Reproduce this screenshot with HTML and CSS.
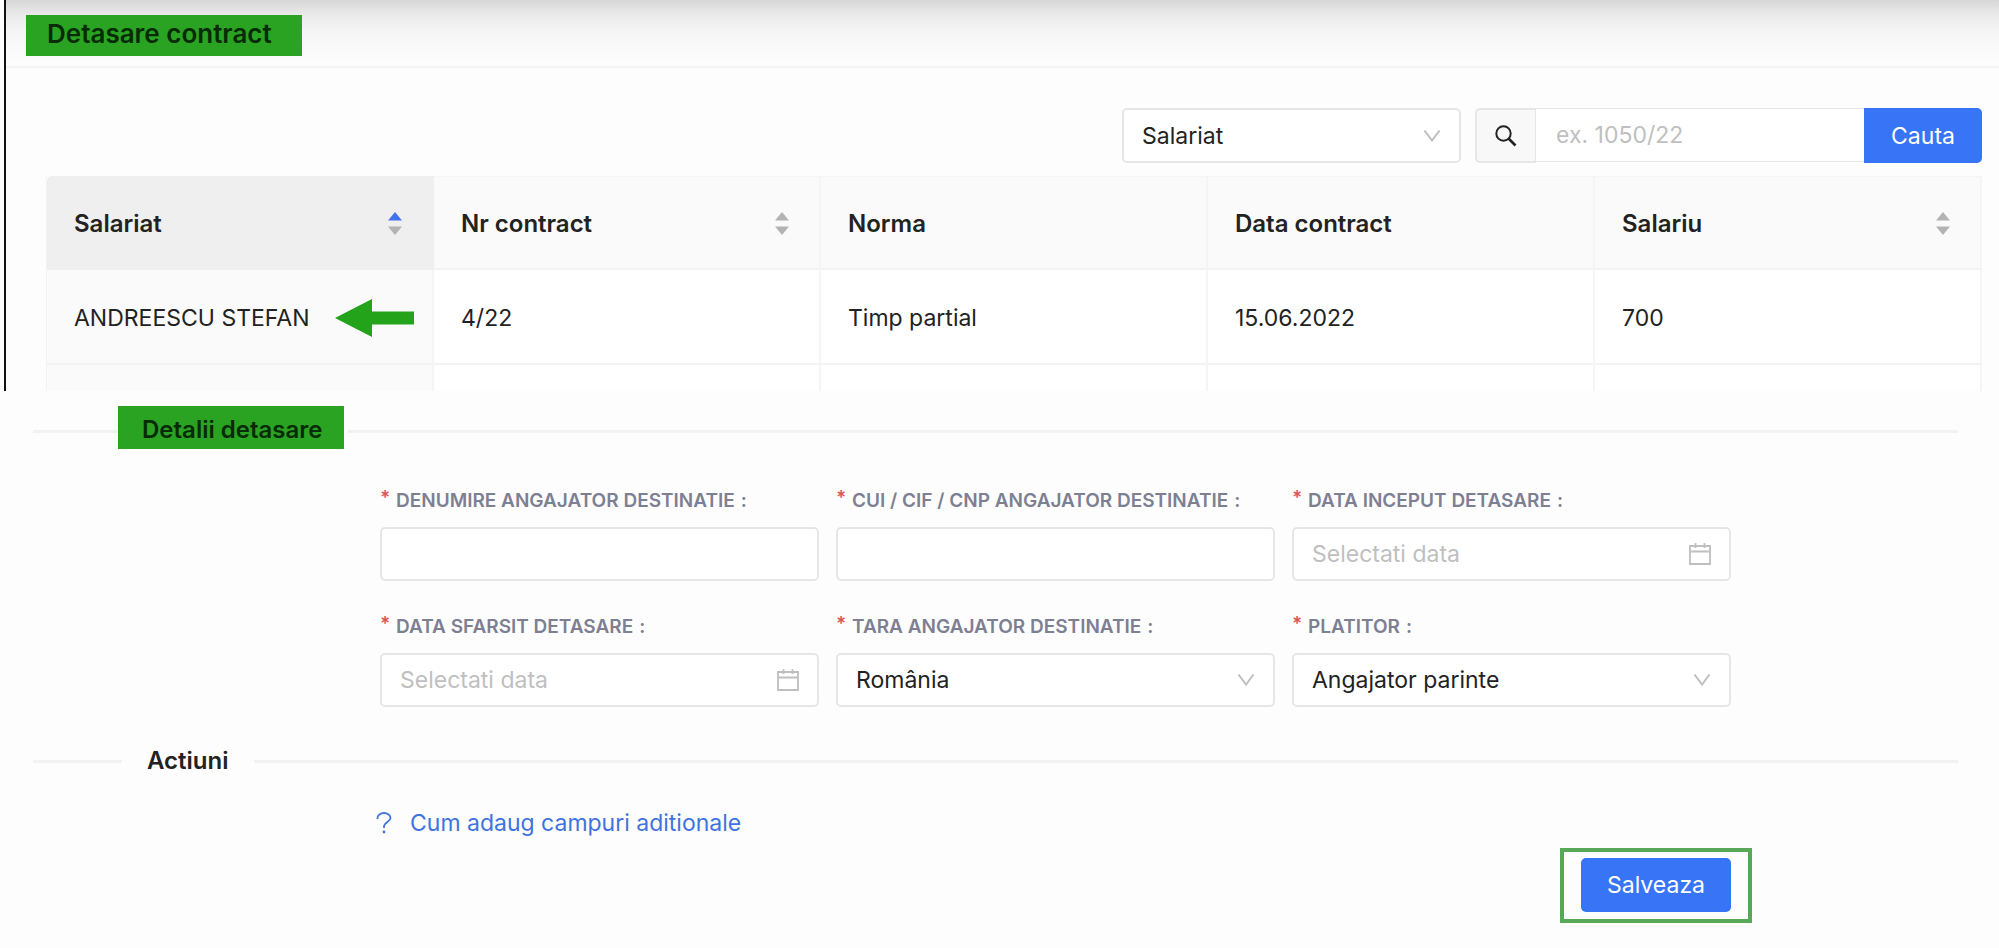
FILE: index.html
```html
<!DOCTYPE html>
<html lang="ro">
<head>
<meta charset="utf-8">
<meta name="viewport" content="width=device-width, initial-scale=1">
<title>Detasare contract</title>
<link rel="stylesheet" href="styles.css">
</head>
<body>
<svg class="sprite" aria-hidden="true">
  <symbol id="chevron" viewBox="0 0 18 14"><path d="M1.5 1.5 9 11.5 16.500 1.500" fill="none" stroke="currentColor" stroke-width="2"/></symbol>
  <symbol id="calendar" viewBox="0 0 22 22"><path d="M1 3h20v18H1zM1 8.500h20M6.500 0v5M15.500 0v5" fill="none" stroke="currentColor" stroke-width="1.800"/></symbol>
  <symbol id="sorter" viewBox="0 0 14 23"><path class="sort-up" d="M7 0 14 8.500H0z"/><path class="sort-down" d="M7 23 0 14.500h14z"/></symbol>
</svg>

<section class="contracts">
  <header class="page-head">
    <h1 class="mark mark-title">Detasare contract</h1>
  </header>
  <div class="contracts-body">
    <form class="search">
      <div class="control search-kind">
        <select class="field" aria-label="Cauta dupa"><option>Salariat</option></select>
        <svg class="chevron"><use href="#chevron"/></svg>
      </div>
      <div class="search-group">
        <label class="search-addon" for="query">
          <svg class="search-icon" viewBox="0 0 22 22" role="img" aria-label="Cautare"><circle cx="8.500" cy="8.500" r="7.200" fill="none" stroke="currentColor" stroke-width="2"/><path d="m13.500 13.500 7 7" stroke="currentColor" stroke-width="2.600"/></svg>
        </label>
        <input class="search-input" id="query" type="text" placeholder="ex. 1050/22">
        <button class="button search-button" type="button">Cauta</button>
      </div>
    </form>
    <table class="table">
      <thead>
        <tr>
          <th class="sorted" aria-sort="ascending"><div class="th-inner">Salariat <svg class="sorter"><use href="#sorter"/></svg></div></th>
          <th><div class="th-inner">Nr contract <svg class="sorter"><use href="#sorter"/></svg></div></th>
          <th>Norma</th>
          <th>Data contract</th>
          <th><div class="th-inner">Salariu <svg class="sorter"><use href="#sorter"/></svg></div></th>
        </tr>
      </thead>
      <tbody>
        <tr>
          <td class="sorted"><div class="name-cell">ANDREESCU STEFAN
            <svg class="arrow" viewBox="0 0 79 38" aria-hidden="true"><path d="M0 19 37 0v12.500h42v13H37V38z" fill="#22a31a"/></svg></div></td>
          <td>4/22</td>
          <td>Timp partial</td>
          <td>15.06.2022</td>
          <td>700</td>
        </tr>
        <tr class="cut-row"><td class="sorted"></td><td></td><td></td><td></td><td></td></tr>
      </tbody>
    </table>
  </div>
</section>

<main class="details">
  <div class="divider divider-marked"><h2 class="mark mark-section">Detalii detasare</h2></div>
  <form class="columns">
    <div class="fields">
      <div class="item">
        <label class="label" for="employer"><span class="star">*</span>DENUMIRE ANGAJATOR DESTINATIE<span class="colon">:</span></label>
        <div class="control"><input class="field" id="employer" type="text"></div>
      </div>
      <div class="item">
        <label class="label" for="cui"><span class="star">*</span>CUI / CIF / CNP ANGAJATOR DESTINATIE<span class="colon">:</span></label>
        <div class="control"><input class="field" id="cui" type="text"></div>
      </div>
      <div class="item">
        <label class="label" for="start"><span class="star">*</span>DATA INCEPUT DETASARE<span class="colon">:</span></label>
        <div class="control"><input class="field" id="start" type="text" placeholder="Selectati data"><svg class="calendar"><use href="#calendar"/></svg></div>
      </div>
      <div class="item">
        <label class="label" for="end"><span class="star">*</span>DATA SFARSIT DETASARE<span class="colon">:</span></label>
        <div class="control"><input class="field" id="end" type="text" placeholder="Selectati data"><svg class="calendar"><use href="#calendar"/></svg></div>
      </div>
      <div class="item">
        <label class="label" for="country"><span class="star">*</span>TARA ANGAJATOR DESTINATIE<span class="colon">:</span></label>
        <div class="control"><select class="field" id="country"><option>România</option></select><svg class="chevron"><use href="#chevron"/></svg></div>
      </div>
      <div class="item">
        <label class="label" for="payer"><span class="star">*</span>PLATITOR<span class="colon">:</span></label>
        <div class="control"><select class="field" id="payer"><option>Angajator parinte</option></select><svg class="chevron"><use href="#chevron"/></svg></div>
      </div>
    </div>
  </form>
  <div class="divider divider-plain"><h2 class="section-title">Actiuni</h2></div>
  <div class="columns">
    <div class="actions">
      <a class="help" href="#"><svg class="help-icon" viewBox="0 0 16 22" aria-hidden="true"><path d="M1.500 7V6a6.500 5 0 0 1 13 0c0 3.500-6.500 4.500-6.500 8.500v1.500" fill="none" stroke="currentColor" stroke-width="1.800"/><circle cx="8" cy="20" r="1.400" fill="currentColor"/></svg>Cum adaug campuri aditionale</a>
      <div class="save-frame"><button class="button save" type="button">Salveaza</button></div>
    </div>
  </div>
</main>
</body>
</html>
```
FILE: styles.css
```css
* { box-sizing: border-box; }

body {
  margin: 0;
  background: #fdfdfd;
  color: #222;
  font: 23px/32px Inter, "Liberation Sans", sans-serif;
}

h1, h2 { margin: 0; }

input, select, button { font: inherit; color: inherit; }

.sprite { position: absolute; width: 0; height: 0; }

/* Contract list */
.contracts {
  margin-left: 4px;
  border-left: 2px solid #111;
}

.page-head {
  display: flex;
  height: 68px;
  padding: 15px 20px 0;
  border-bottom: 2px solid #f4f4f4;
  background: linear-gradient(#d6d6d6, #dfdfdf 6px, #ebebeb 16px, #f4f4f4 30px, #f9f9f9 46px, #fdfdfd 64px);
}

.mark { background: #2aa323; color: #062b05; font-weight: 600; }

.mark-title {
  height: 41px;
  padding: 0 30px 0 21px;
  font-size: 26px;
  line-height: 38px;
}

.contracts-body { padding: 40px 17px 0 40px; }

.search {
  display: flex;
  justify-content: flex-end;
  gap: 14px;
  margin-bottom: 13px;
}

.search-kind { width: 339px; }
.search-kind .field { height: 55px; }

.search-group { display: flex; align-items: flex-start; width: 507px; }

.search-addon {
  display: flex;
  flex: none;
  align-items: center;
  justify-content: center;
  width: 61px;
  height: 55px;
  border: 2px solid #e6e6e6;
  border-right-width: 1px;
  border-radius: 5px 0 0 5px;
  background: #f8f8f8;
}

.search-icon { width: 22px; height: 22px; }

.search-input {
  flex: 1;
  min-width: 0;
  height: 54px;
  padding: 0 20px;
  border: solid #e6e6e6;
  border-width: 1px 0;
  background: #fff;
}

.button {
  border: 0;
  border-radius: 5px;
  background: #3875f6;
  color: #fff;
}

.search-button { flex: none; width: 118px; height: 55px; padding: 0; border-radius: 0 5px 5px 0; }

::placeholder { color: #bfbfbf; opacity: 1; }

/* Table */
.table {
  width: 100%;
  table-layout: fixed;
  border-collapse: separate;
  border-spacing: 0;
  border-left: 1px solid #f3f3f3;
}

.table th, .table td {
  height: 95px;
  padding: 2px 30px 0 27px;
  border-right: 2px solid #f5f5f5;
  border-bottom: 2px solid #f3f3f3;
  background: #fff;
  text-align: left;
}

.table th { height: 94px; border-top: 1px solid #f5f5f5; background: #fafafa; font-size: 24px; font-weight: 600; }
.table th.sorted { background: #efefef; border-color: #efefef; border-top-left-radius: 5px; }
.table td.sorted { background: #fafafa; }
.table .cut-row td { height: 26px; border-bottom: 0; }

.th-inner, .name-cell { display: flex; align-items: center; justify-content: space-between; }
.name-cell { margin-right: -12px; }

.sorter { --sort-up: #b3b3b3; width: 14px; height: 23px; }
.sorted .sorter { --sort-up: #4272ee; }
.sort-up { fill: var(--sort-up); }
.sort-down { fill: #b3b3b3; }

.arrow { width: 79px; height: 38px; flex: none; }

/* Secondment details */
.details { padding: 15px 41px 24px 33px; }

.divider { display: flex; align-items: center; }
.divider::before, .divider::after { content: ""; height: 3px; background: #f2f2f2; }
.divider::before { width: 85px; }
.divider::after { flex: 1; margin-left: 4px; }
.divider-marked::before, .divider-marked::after { margin-top: 7px; }

.mark-section {
  height: 43px;
  padding: 0 22px 0 24px;
  font-size: 24px;
  line-height: 48px;
}

.section-title { font-size: 24px; line-height: 32px; font-weight: 600; }
.divider-plain { margin-top: 38px; }
.divider-plain::before { width: 89px; margin-right: 25px; }
.divider-plain::after { margin-left: 25px; }

.columns { display: grid; grid-template-columns: 347fr 1351fr 227fr; }
.fields, .actions { grid-column: 2; min-width: 0; }

.fields {
  display: grid;
  grid-template-columns: repeat(3, 1fr);
  gap: 34px 17px;
  margin-top: 40px;
}

.label {
  display: flex;
  height: 24px;
  margin-bottom: 14px;
  color: #7d7f93;
  font-size: 19px;
  line-height: 24px;
  font-weight: 600;
  white-space: nowrap;
}

.star { width: 16px; color: #e25555; line-height: 18px; }
.colon { margin-left: 6px; }

.control { position: relative; }

.field {
  display: block;
  width: 100%;
  height: 54px;
  padding: 0 18px;
  border: 2px solid #e6e6e6;
  border-radius: 5px;
  background: #fff;
  appearance: none;
}

.chevron, .calendar { position: absolute; top: 0; bottom: 0; margin: auto 0; color: #bfbfbf; pointer-events: none; }
.chevron { right: 20px; width: 18px; height: 14px; }
.calendar { right: 20px; width: 22px; height: 22px; }

.help {
  display: flex;
  align-items: center;
  gap: 18px;
  width: max-content;
  margin: 30px 0 0 -4px;
  color: #3f73e0;
  text-decoration: none;
}

.help-icon { width: 16px; height: 22px; }

.save-frame {
  width: max-content;
  margin: 9px -21px 0 auto;
  padding: 6px 17px 7px;
  border: 4px solid #57a957;
}

.save { display: block; width: 150px; height: 54px; padding: 0; }
```
